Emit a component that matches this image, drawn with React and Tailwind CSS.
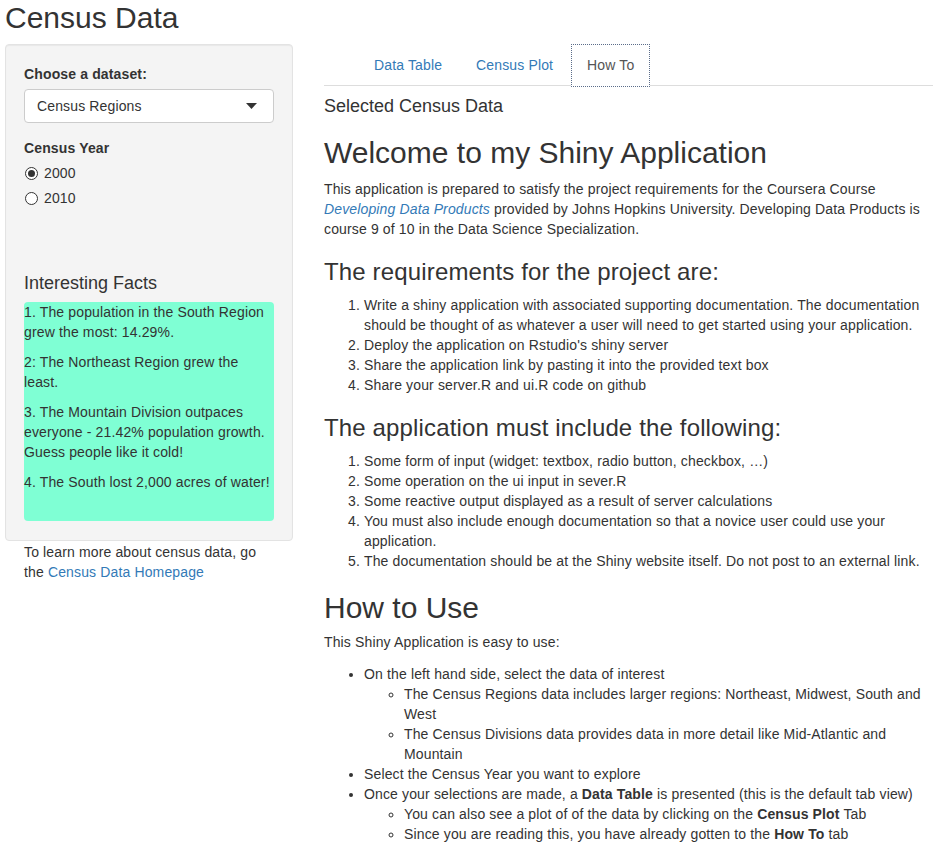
import React from "react";

function Radio({ checked, label }) {
  return (
    <div className="flex items-center h-5">
      <span className="w-[13px] h-[13px] rounded-full border border-[#333] bg-white flex items-center justify-center ml-[1px]">
        {checked && <span className="w-[7px] h-[7px] rounded-full bg-[#333]" />}
      </span>
      <span className="ml-[6px]">{label}</span>
    </div>
  );
}

export default function App() {
  return (
    <div
      className="bg-white text-[#333] text-[14px] leading-[20px] tracking-[0.14px] min-h-[859px]"
      style={{ fontFamily: '"Liberation Sans", Arial, Helvetica, sans-serif' }}
    >
      <div className="pl-[5px] pr-[4px] pt-[1px]">
        <h2 className="text-[30px] leading-[33px] tracking-normal mb-[10px] font-normal">Census Data</h2>
        <div className="flex gap-[31px] items-start">
          {/* Sidebar */}
          <div className="w-[288px] shrink-0">
            <div className="bg-[#f4f4f4] border border-[#e3e3e3] rounded-[4px] pt-[19px] pb-[19px] pl-[18px] pr-[18px] shadow-[inset_0_1px_1px_rgba(0,0,0,0.05)]">
              <label className="block font-bold mb-[5px]">Choose a dataset:</label>
              <div className="h-[34px] bg-white border border-[#ccc] rounded-[4px] flex items-center justify-between pl-[12px] pr-[16px]">
                <span>Census Regions</span>
                <svg width="11" height="6" viewBox="0 0 11 6">
                  <path d="M0 0 L11 0 L5.5 6 Z" fill="#333" />
                </svg>
              </div>
              <label className="block font-bold mt-[15px] mb-[5px]">Census Year</label>
              <div className="flex flex-col gap-[5px]">
                <Radio checked label="2000" />
                <Radio label="2010" />
              </div>
              <h4 className="text-[18px] leading-[20px] tracking-normal mt-[65px] mb-[9px] font-normal">Interesting Facts</h4>
              <div className="bg-[#7fffd4] rounded-[4px] h-[219px]">
                <p className="mb-[10px]">1. The population in the South Region grew the most: 14.29%.</p>
                <p className="mb-[10px]">2: The Northeast Region grew the least.</p>
                <p className="mb-[10px]">3. The Mountain Division outpaces everyone - 21.42% population growth. Guess people like it cold!</p>
                <p className="mb-[10px]">4. The South lost 2,000 acres of water!</p>
              </div>
            </div>
            <p className="pl-[19px] pr-[19px] mt-[1px]">
              To learn more about census data, go the{" "}
              <a className="text-[#337ab7]">Census Data Homepage</a>
            </p>
          </div>

          {/* Main */}
          <div className="flex-1 min-w-0">
            <div className="border-b border-[#ddd] flex pl-[34px] h-[42px]">
              <a className="px-[15px] py-[10px] border border-transparent mr-[2px] text-[#337ab7] h-[42px]">Data Table</a>
              <a className="px-[15px] py-[10px] border border-transparent mr-[2px] text-[#337ab7] h-[42px]">Census Plot</a>
              <a className="px-[15px] py-[10px] border border-dotted border-[#5b6d8a] bg-white text-[#555] h-[43px]">How To</a>
            </div>
            <h4 className="text-[18px] leading-[20px] tracking-normal mt-[10px] font-normal">Selected Census Data</h4>
            <h2 className="text-[30px] leading-[33px] tracking-normal mt-[20px] mb-[10px] font-normal">Welcome to my Shiny Application</h2>
            <p className="mb-[10px]">
              This application is prepared to satisfy the project requirements for the Coursera Course{" "}
              <em className="text-[#337ab7]">Developing Data Products</em> provided by Johns Hopkins University. Developing Data Products is course 9 of 10 in the Data Science Specialization.
            </p>
            <h3 className="text-[24px] leading-[26px] tracking-[0.15px] mt-[20px] mb-[10px] font-normal">The requirements for the project are:</h3>
            <ol className="list-decimal pl-[40px] mb-[10px]">
              <li>Write a shiny application with associated supporting documentation. The documentation should be thought of as whatever a user will need to get started using your application.</li>
              <li>Deploy the application on Rstudio's shiny server</li>
              <li>Share the application link by pasting it into the provided text box</li>
              <li>Share your server.R and ui.R code on github</li>
            </ol>
            <h3 className="text-[24px] leading-[26px] tracking-[0.15px] mt-[20px] mb-[10px] font-normal">The application must include the following:</h3>
            <ol className="list-decimal pl-[40px] mb-[10px]">
              <li>Some form of input (widget: textbox, radio button, checkbox, …)</li>
              <li>Some operation on the ui input in sever.R</li>
              <li>Some reactive output displayed as a result of server calculations</li>
              <li>You must also include enough documentation so that a novice user could use your application.</li>
              <li>The documentation should be at the Shiny website itself. Do not post to an external link.</li>
            </ol>
            <h2 className="text-[30px] leading-[33px] tracking-normal mt-[20px] mb-[8px] font-normal">How to Use</h2>
            <p className="mb-[12px]">This Shiny Application is easy to use:</p>
            <ul className="list-disc pl-[40px]">
              <li>
                On the left hand side, select the data of interest
                <ul className="list-[circle] pl-[40px]">
                  <li>The Census Regions data includes larger regions: Northeast, Midwest, South and West</li>
                  <li>The Census Divisions data provides data in more detail like Mid-Atlantic and Mountain</li>
                </ul>
              </li>
              <li>Select the Census Year you want to explore</li>
              <li>
                Once your selections are made, a <b>Data Table</b> is presented (this is the default tab view)
                <ul className="list-[circle] pl-[40px]">
                  <li>You can also see a plot of of the data by clicking on the <b>Census Plot</b> Tab</li>
                  <li>Since you are reading this, you have already gotten to the <b>How To</b> tab</li>
                </ul>
              </li>
            </ul>
          </div>
        </div>
      </div>
    </div>
  );
}
